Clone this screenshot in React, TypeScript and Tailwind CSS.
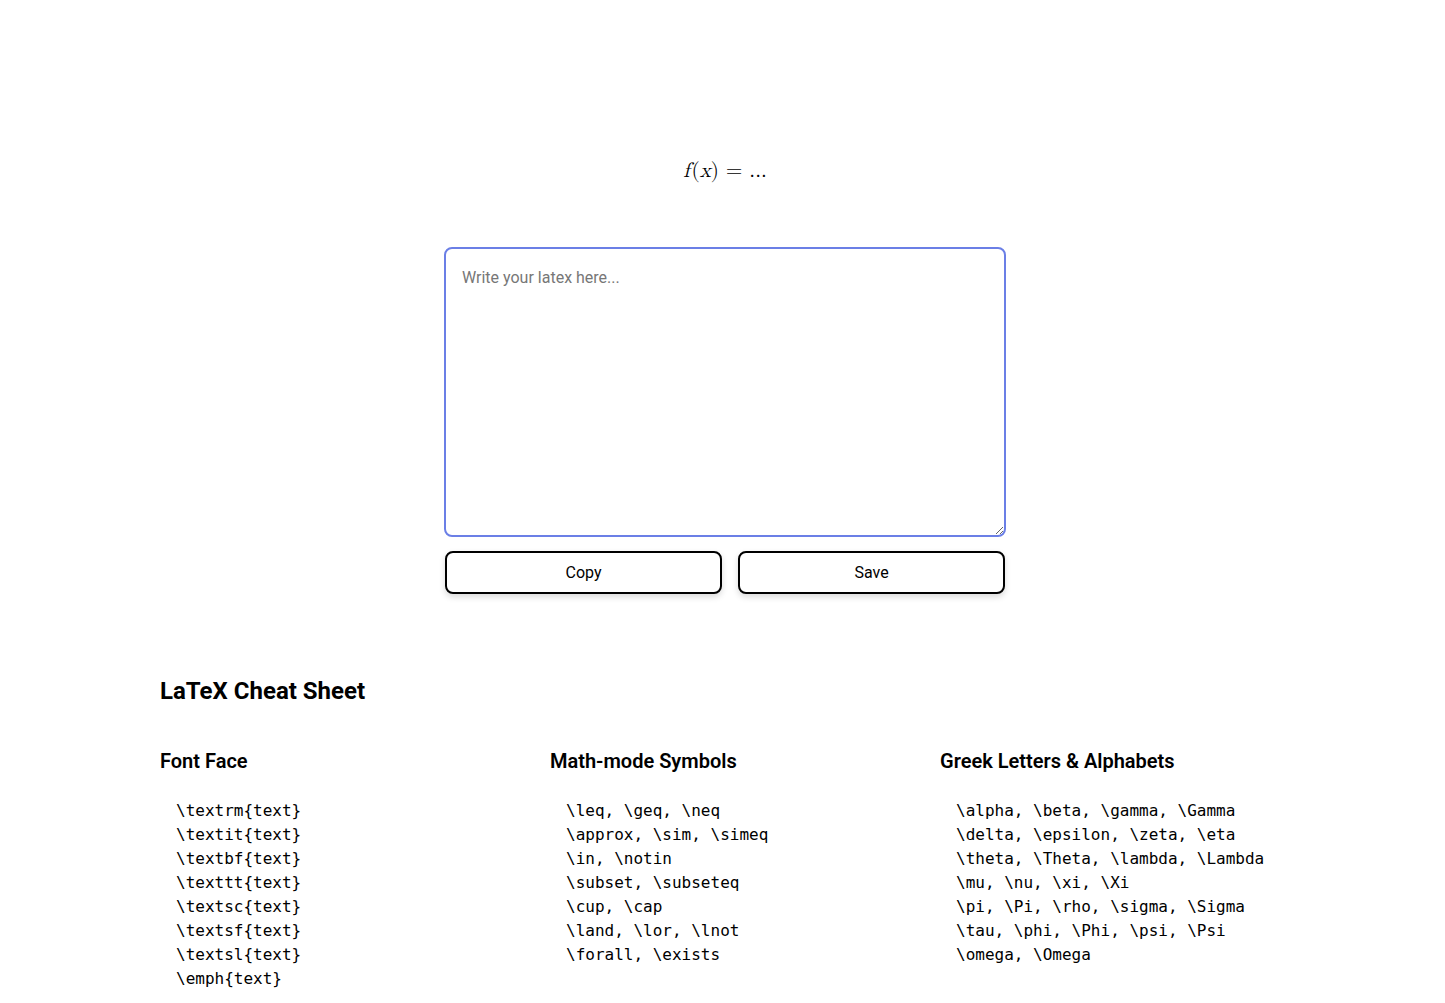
import React from "react";

const roboto = { fontFamily: "Roboto, 'Liberation Sans', sans-serif" };

const cols = [
  {
    title: "Font Face",
    items: [
      "\\textrm{text}",
      "\\textit{text}",
      "\\textbf{text}",
      "\\texttt{text}",
      "\\textsc{text}",
      "\\textsf{text}",
      "\\textsl{text}",
      "\\emph{text}",
    ],
  },
  {
    title: "Math-mode Symbols",
    items: [
      "\\leq, \\geq, \\neq",
      "\\approx, \\sim, \\simeq",
      "\\in, \\notin",
      "\\subset, \\subseteq",
      "\\cup, \\cap",
      "\\land, \\lor, \\lnot",
      "\\forall, \\exists",
    ],
  },
  {
    title: "Greek Letters & Alphabets",
    items: [
      "\\alpha, \\beta, \\gamma, \\Gamma",
      "\\delta, \\epsilon, \\zeta, \\eta",
      "\\theta, \\Theta, \\lambda, \\Lambda",
      "\\mu, \\nu, \\xi, \\Xi",
      "\\pi, \\Pi, \\rho, \\sigma, \\Sigma",
      "\\tau, \\phi, \\Phi, \\psi, \\Psi",
      "\\omega, \\Omega",
    ],
  },
];

export default function App() {
  return (
    <div className="min-h-screen bg-white text-black" style={roboto}>
      <div className="flex flex-col items-center pl-[5px] pt-[156px]">
        <div
          className="h-[30px] text-[21px] leading-[30px] text-black"
          style={{ fontFamily: "'Latin Modern Math', 'Liberation Serif', serif" }}
        >
          <i className="pr-[2px]">f</i>(<i>x</i>) = ...
        </div>
        <textarea
          autoFocus
          placeholder="Write your latex here..."
          className="mt-[61px] h-[290px] w-[562px] resize-y rounded-[8px] border-2 border-[#6b7fe6] px-4 pb-4 pt-[19px] text-[16px] leading-[20px] outline-none placeholder:text-[#777]"
          style={roboto}
        />
        <div className="mt-[14px] flex w-[560px] gap-4">
          <button className="h-[43px] w-[277px] rounded-[8px] border-2 border-black bg-white text-[16px] shadow-[0_3px_6px_rgba(0,0,0,0.15)]">
            Copy
          </button>
          <button className="h-[43px] w-[267px] rounded-[8px] border-2 border-black bg-white text-[16px] shadow-[0_3px_6px_rgba(0,0,0,0.15)]">
            Save
          </button>
        </div>
      </div>
      <div className="pl-[160px] pt-[81px]">
        <h1 className="text-[24px] font-bold leading-[32px]">LaTeX Cheat Sheet</h1>
        <div className="mt-[40px] grid grid-cols-[390px_390px_390px]">
          {cols.map((c) => (
            <div key={c.title}>
              <h2 className="text-[20px] font-semibold leading-[28px]">{c.title}</h2>
              <ul
                className="mt-[24px] pl-4 text-[16px] leading-[24px]"
                style={{ fontFamily: "'DejaVu Sans Mono', monospace" }}
              >
                {c.items.map((it) => (
                  <li key={it} className="whitespace-pre">{it}</li>
                ))}
              </ul>
            </div>
          ))}
        </div>
      </div>
    </div>
  );
}
